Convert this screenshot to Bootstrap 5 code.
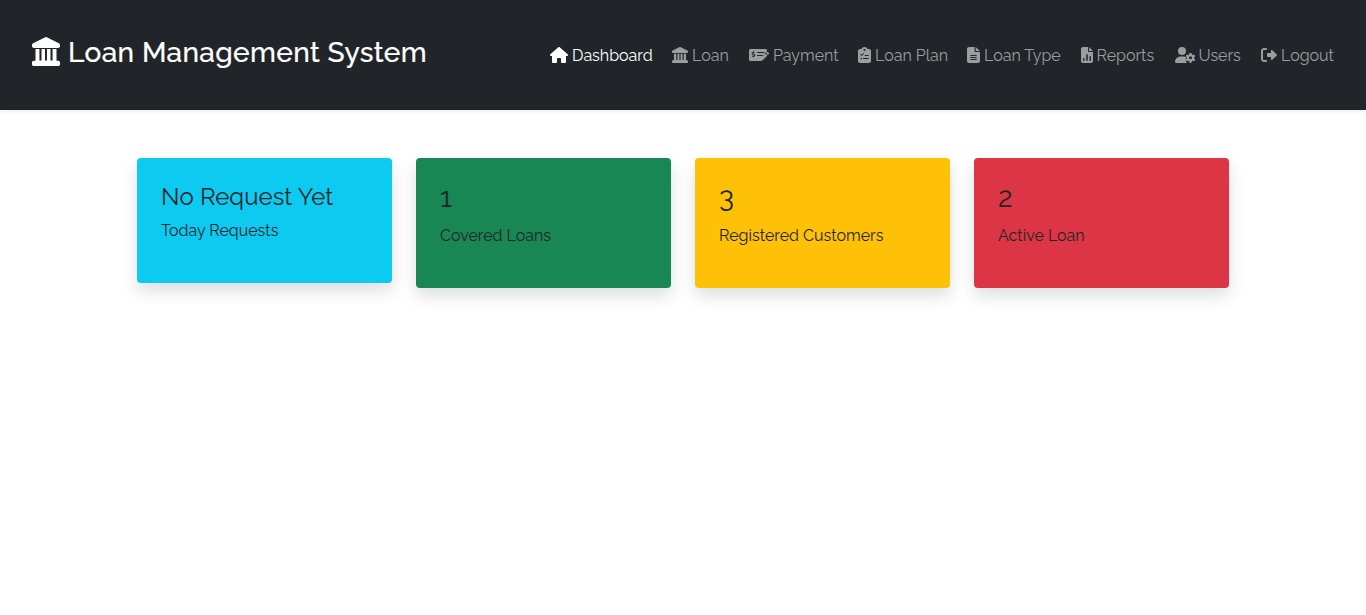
<!DOCTYPE html>
<html lang="en">
<head>
<meta charset="utf-8">
<meta name="viewport" content="width=device-width, initial-scale=1">
<title>Loan Management System</title>
<link href="https://cdn.jsdelivr.net/npm/bootstrap@5.3.0/dist/css/bootstrap.min.css" rel="stylesheet">
<style>
body { font-family: Raleway, Lato, sans-serif; color: #212529; background: #fff; min-height: 100vh; }
.topbar { height: 110px; background: #212529; padding: 0 32px; }
.brand-title { font-size: 28px; line-height: 34px; font-weight: 500; letter-spacing: .37px; -webkit-text-stroke: .2px #fff; color: #fff; margin-top: -4px; }
.brand-title svg { width: 28px; height: 29px; margin: -4px 8px 0 0; }
.topbar svg { fill: currentColor; flex: none; }
.main-menu .nav-link { display: flex; align-items: center; padding: 2px 0 0; color: #9b9d9e; white-space: nowrap; line-height: 24px; }
.main-menu .nav-link.active { color: #fff; }
.main-menu svg { height: 16px; margin: 0 4px 2px 0; }
.w-dash { width: 122px; } .w-loan { width: 77px; } .w-pay { width: 109px; } .w-plan { width: 109px; }
.w-type { width: 113.5px; } .w-rep { width: 94px; } .w-user { width: 86.5px; } .w-out { width: 73px; }
.stat { border-radius: 4px; padding: 24px; }
.stat h3, .stat h4 { font-weight: 400; line-height: 1.2; }
.stat h4 { font-size: 24px; margin: 1px 0 7px; letter-spacing: .05px; }
.stat h3 { font-size: 28px; margin: -1px 0 9px; }
</style>
</head>
<body>
<svg class="d-none">
<symbol id="bank-wide" viewBox="0 0 512 512" preserveAspectRatio="none"><path d="M243 3 20 109C8 115 0 124 0 137v23c0 18 14 32 32 32h448c18 0 32-14 32-32v-23c0-13-8-22-20-28L269 3c-8-4-18-4-26 0zM64 212V420H32c-18 0-32 14-32 32v28c0 18 14 32 32 32h448c18 0 32-14 32-32v-28c0-18-14-32-32-32h-32V212h-72V416h-38V212h-64V416h-36V212h-64V416h-38V212z"/></symbol>
</svg>
<nav class="topbar d-flex align-items-center justify-content-between shadow-sm">
  <h1 class="brand-title d-flex align-items-center mb-0"><svg><use href="#bank-wide"/></svg>Loan Management System</h1>
  <ul class="main-menu nav flex-nowrap">
    <li class="w-dash"><a class="nav-link active" href="#"><svg width="18" viewBox="0 0 576 512"><path d="M575.8 255.5c0 18-15 32.1-32 32.1h-32l.7 160.2V472c0 22.1-17.9 40-40 40H392c-22.1 0-40-17.9-40-40V384c0-17.7-14.3-32-32-32H256c-17.7 0-32 14.3-32 32v88c0 22.1-17.9 40-40 40H104c-22.1 0-40-17.9-40-40V287.6H32c-18 0-32-14-32-32.1c0-9 3-17 10-24L266.4 8c7-7 15-8 22-8s15 2 21 7L564.8 231.5c8 7 12 15 11 24z"/></svg>Dashboard</a></li>
    <li class="w-loan"><a class="nav-link" href="#"><svg width="16"><use href="#bank-wide"/></svg>Loan</a></li>
    <li class="w-pay"><a class="nav-link" href="#"><svg width="20" viewBox="0 0 640 512"><path fill-rule="evenodd" d="M48 64H528c27 0 48 21 48 48v34L463 259c-9 9-15 19-18 31l-28 110c-3 17-1 31 2 48H48c-27 0-48-21-48-48V112C0 85 21 64 48 64zM272 160c-9 0-16 7-16 16s7 16 16 16H480c9 0 16-7 16-16s-7-16-16-16zM272 256c-9 0-16 7-16 16s7 16 16 16H416l30-32zM128 136v22c-27 5-43 21-43 45 0 29 25 39 51 47 23 7 33 10 31 20-2 12-30 14-69-1l-9 29c12 5 26 9 39 10v22h31v-22c25-5 42-20 42-45 0-30-24-41-52-49-23-7-32-12-30-20 3-10 27-9 58-2l8-30-26-5v-21z"/><path d="M568 174c15-15 39-15 54 0l9 9c12 12 12 32 0 44l-25 25-63-63zM525 210l63 63L455 406c-5 5-10 8-16 10l-55 14c-10 3-20-7-17-17l15-55c1-6 5-11 9-15z"/></svg>Payment</a></li>
    <li class="w-plan"><a class="nav-link" href="#"><svg width="13" viewBox="0 0 384 512" preserveAspectRatio="none"><path fill-rule="evenodd" d="M192 0c-42 0-77 27-91 64H64C29 64 0 93 0 128v320c0 35 29 64 64 64h256c35 0 64-29 64-64V128c0-35-29-64-64-64h-37C269 27 234 0 192 0zm0 64a32 32 0 1 1 0 64 32 32 0 0 1 0-64zM66 238l20-20 26 26 48-53 22 20-69 77zM208 256h96c9 0 16 7 16 16s-7 16-16 16h-96c-9 0-16-7-16-16s7-16 16-16zM96 344a24 24 0 1 1 0 48 24 24 0 0 1 0-48zM160 352h144c9 0 16 7 16 16s-7 16-16 16H160c-9 0-16-7-16-16s7-16 16-16z"/></svg>Loan Plan</a></li>
    <li class="w-type"><a class="nav-link" href="#"><svg width="13" viewBox="0 0 384 512" preserveAspectRatio="none"><path fill-rule="evenodd" d="M64 0C29 0 0 29 0 64v384c0 35 29 64 64 64h256c35 0 64-29 64-64V160H256c-18 0-32-14-32-32V0zM112 256h160a16 16 0 0 1 0 32H112a16 16 0 0 1 0-32zM112 320h160a16 16 0 0 1 0 32H112a16 16 0 0 1 0-32zM112 384h160a16 16 0 0 1 0 32H112a16 16 0 0 1 0-32z"/><path d="M256 0v128h128z"/></svg>Loan Type</a></li>
    <li class="w-rep"><a class="nav-link" href="#"><svg width="12" viewBox="0 0 384 512"><path fill-rule="evenodd" d="M64 0C29 0 0 29 0 64v384c0 35 29 64 64 64h256c35 0 64-29 64-64V160H256c-18 0-32-14-32-32V0zM88 352c13 0 24 11 24 24v64H64v-64c0-13 11-24 24-24zM192 224c13 0 24 11 24 24v192h-48V248c0-13 11-24 24-24zM296 288c13 0 24 11 24 24v128h-48V312c0-13 11-24 24-24z"/><path d="M256 0v128h128z"/></svg>Reports</a></li>
    <li class="w-user"><a class="nav-link" href="#"><svg width="20" viewBox="0 0 640 512"><path d="M224 0a128 128 0 1 1 0 256 128 128 0 0 1 0-256zM178 304h92c37 0 70 8 99 20-24 22-31 50-20 69l12 20-12 20c-14 30 3 51 35 77H30c-17 0-30-13-30-30 0-98 80-176 178-176z"/><path fill-rule="evenodd" d="M462 193h68l9 44 31 18 43-14 34 58-34 30v36l34 30-34 58-43-14-31 18-9 44h-68l-9-44-31-18-43 14-34-58 34-30v-36l-34-30 34-58 43 14 31-18zM496 299a48 48 0 1 0 0 96 48 48 0 0 0 0-96z"/></svg>Users</a></li>
    <li class="w-out"><a class="nav-link" href="#"><svg width="16" viewBox="0 0 512 512"><path d="M160 96c18 0 32-14 32-32s-14-32-32-32H96C43 32 0 75 0 128v256c0 53 43 96 96 96h64c18 0 32-14 32-32s-14-32-32-32H96c-18 0-32-14-32-32V128c0-18 14-32 32-32zM505 273c4-4 7-11 7-17s-3-13-7-17L361 103c-7-7-17-9-26-5s-15 13-15 22v72h-96c-18 0-32 14-32 32v64c0 18 14 32 32 32h96v72c0 10 6 18 15 22s19 2 26-5z"/></svg>Logout</a></li>
  </ul>
</nav>
<main class="container-xl px-4 py-5">
  <div class="row align-items-start">
    <div class="col-3"><div class="stat bg-info shadow"><h4>No Request Yet</h4><p>Today Requests</p></div></div>
    <div class="col-3"><div class="stat bg-success shadow"><h3>1</h3><p>Covered Loans</p></div></div>
    <div class="col-3"><div class="stat bg-warning shadow"><h3>3</h3><p>Registered Customers</p></div></div>
    <div class="col-3"><div class="stat bg-danger shadow"><h3>2</h3><p>Active Loan</p></div></div>
  </div>
</main>
<script src="https://cdn.jsdelivr.net/npm/bootstrap@5.3.0/dist/js/bootstrap.bundle.min.js"></script>
</body>
</html>
